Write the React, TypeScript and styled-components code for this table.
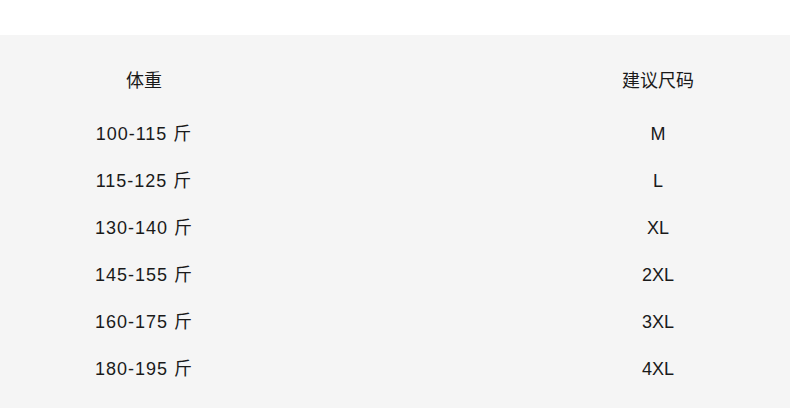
import React from 'react';
import styled, {createGlobalStyle} from 'styled-components';

const GlobalStyle = createGlobalStyle`
  body {
    margin: 0;
    background: #ffffff;
    font-family: "Noto Sans CJK SC", "Noto Sans", sans-serif;
  }
`;

const Page = styled.div`
  width: 790px;
  height: 408px;
  padding-top: 35px;
  box-sizing: border-box;
  background: #ffffff;
`;

const Panel = styled.div`
  height: 100%;
  background: #f5f5f5;
  padding: 20px 32px 0 0;
  box-sizing: border-box;
`;

const Row = styled.div<{$head?: boolean}>`
  display: grid;
  grid-template-columns: 288px 200px;
  justify-content: space-between;
  align-items: center;
  height: 47px;
  margin-bottom: ${p => (p.$head ? '8px' : '0')};
`;

const Cell = styled.div<{$latin?: boolean; $spaced?: boolean}>`
  text-align: center;
  font-size: 18px;
  line-height: 26px;
  font-family: ${p =>
    p.$latin
      ? '"Liberation Sans", "Noto Sans CJK SC", sans-serif'
      : '"Noto Sans CJK SC", sans-serif'};
  letter-spacing: ${p => (p.$spaced ? '1px' : '0')};
  color: #1a1a1a;
  white-space: nowrap;
`;

const rows = [
  ['100-115 斤', 'M'],
  ['115-125 斤', 'L'],
  ['130-140 斤', 'XL'],
  ['145-155 斤', '2XL'],
  ['160-175 斤', '3XL'],
  ['180-195 斤', '4XL'],
];

export default function App() {
  return (
    <Page>
      <GlobalStyle />
      <Panel>
        <Row $head>
          <Cell>体重</Cell>
          <Cell>建议尺码</Cell>
        </Row>
        {rows.map(([weight, size]) => (
          <Row key={weight}>
            <Cell $latin $spaced>{weight}</Cell>
            <Cell $latin>{size}</Cell>
          </Row>
        ))}
      </Panel>
    </Page>
  );
}
